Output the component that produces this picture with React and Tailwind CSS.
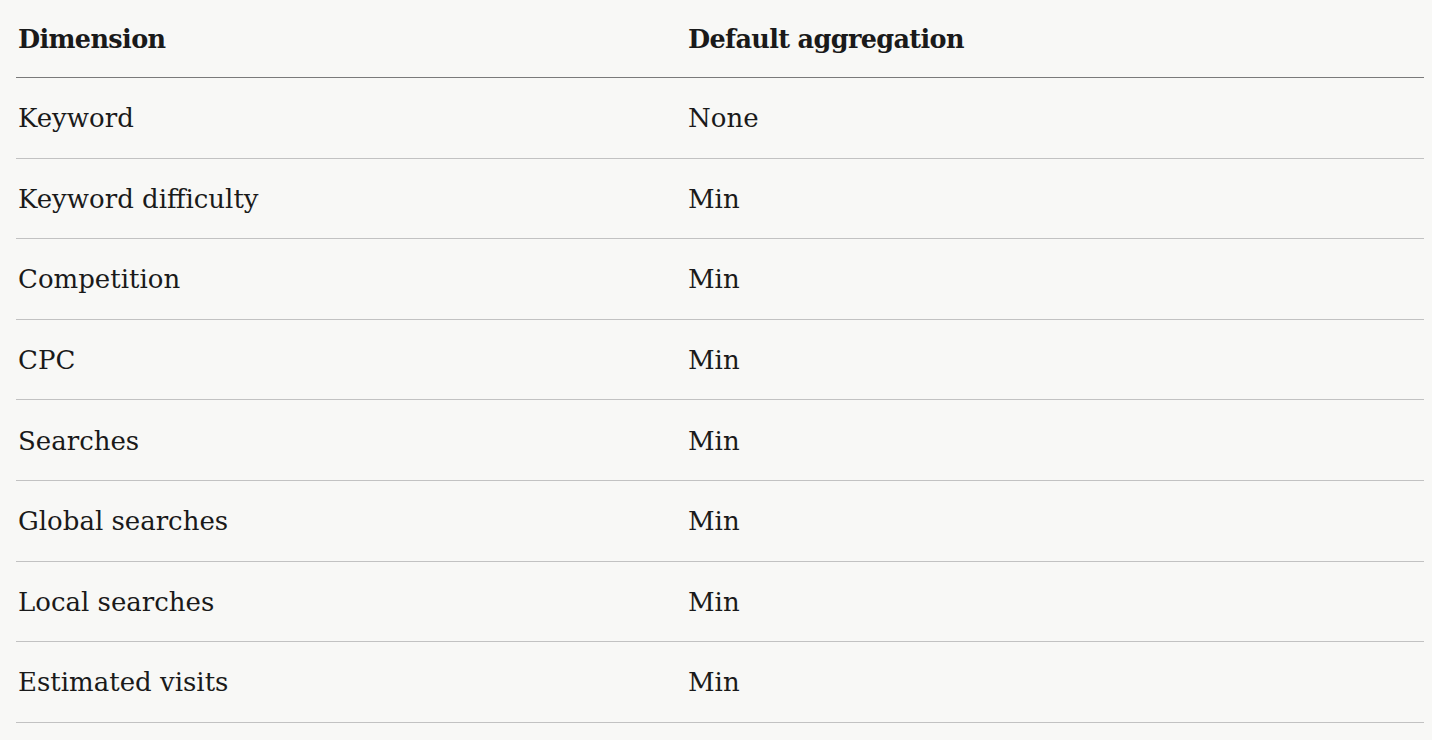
const rows = [
  ["Keyword", "None"],
  ["Keyword difficulty", "Min"],
  ["Competition", "Min"],
  ["CPC", "Min"],
  ["Searches", "Min"],
  ["Global searches", "Min"],
  ["Local searches", "Min"],
  ["Estimated visits", "Min"],
];

export default function App() {
  return (
    <div className="min-h-screen w-full bg-[#f8f8f6] pl-4 pr-2 font-['DejaVu_Serif',serif] text-[#1a1a1a]">
      <div className="w-full">
        {/* Header */}
        <div className="grid h-[78px] grid-cols-[670px_1fr] items-center border-b border-[#7a7a7a] pl-[2px] pt-[2px] text-[25.5px] font-bold tracking-[-0.025em]">
          <div>Dimension</div>
          <div>Default aggregation</div>
        </div>

        {rows.map(([dim, agg]) => (
          <div
            key={dim}
            className="grid h-[80.6px] grid-cols-[670px_1fr] items-center border-b border-[#c2c2c2] pl-[2px] pt-[2px] text-[26px]"
          >
            <div>{dim}</div>
            <div>{agg}</div>
          </div>
        ))}
      </div>
    </div>
  );
}
